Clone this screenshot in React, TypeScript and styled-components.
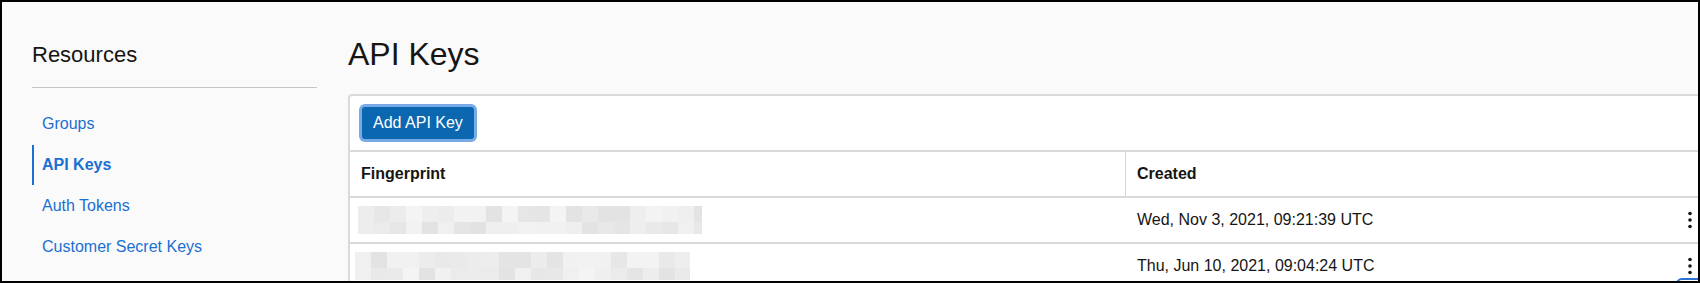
import React from 'react'
import styled, { createGlobalStyle } from 'styled-components'

const GlobalStyle = createGlobalStyle`
  html, body {
    margin: 0;
    padding: 0;
    background: #fff;
  }
  body {
    font-family: 'Liberation Sans', Arial, sans-serif;
  }
  * {
    box-sizing: border-box;
  }
`

const Frame = styled.div`
  position: relative;
  display: flex;
  width: 1700px;
  height: 283px;
  border: 2px solid #000;
  background: #fafafa;
  overflow: hidden;
`

const Sidebar = styled.aside`
  flex: 0 0 285px;
  margin-left: 30px;
  padding-top: 39px;
`

const SideTitle = styled.h2`
  margin: 0;
  padding-bottom: 18px;
  border-bottom: 1px solid #c6c6c6;
  font-size: 22px;
  line-height: 28px;
  font-weight: 400;
  color: #161513;
`

const NavList = styled.nav`
  display: flex;
  flex-direction: column;
  gap: 1px;
  margin-top: 16px;
`

const NavItem = styled.a<{ $active?: boolean }>`
  display: flex;
  align-items: center;
  height: 40px;
  padding-left: 8px;
  border-left: 2px solid ${(p) => (p.$active ? '#1a6fd2' : 'transparent')};
  font-size: 16px;
  font-weight: ${(p) => (p.$active ? 700 : 400)};
  color: #1a6fd2;
  text-decoration: none;
  white-space: nowrap;
`

const Main = styled.main`
  flex: 0 0 1364px;
  margin-left: 31px;
  padding-top: 33px;
`

const PageTitle = styled.h1`
  margin: 0 0 21px;
  font-size: 32px;
  line-height: 38px;
  font-weight: 400;
  color: #161513;
`

const Panel = styled.section`
  width: 1364px;
  border: 2px solid #d8dadc;
  border-radius: 4px;
  background: #fff;
`

const Toolbar = styled.div`
  display: flex;
  align-items: center;
  height: 56px;
  padding-left: 12px;
  border-bottom: 2px solid #d8dadc;
`

const PrimaryButton = styled.button`
  height: 32px;
  padding: 0 11px;
  border: none;
  border-radius: 3px;
  background: #0b67b0;
  box-shadow: 0 0 0 3px #78aae8;
  color: #fff;
  font-family: inherit;
  font-size: 16px;
  cursor: pointer;
`

const Row = styled.div`
  display: grid;
  grid-template-columns: 775px 1fr 40px;
  height: 46px;
  border-bottom: 2px solid #d8dadc;
`

const HeadCell = styled.div<{ $divider?: boolean }>`
  display: flex;
  align-items: center;
  padding-left: 11px;
  border-left: ${(p) => (p.$divider ? '1px solid #d6d6d6' : 'none')};
  font-size: 16px;
  font-weight: 700;
  color: #161513;
`

const Cell = styled.div<{ $pad?: number }>`
  display: flex;
  align-items: center;
  padding-left: ${(p) => p.$pad ?? 12}px;
  font-size: 16px;
  color: #161513;
  white-space: nowrap;
`

const ActionCell = styled.div`
  display: flex;
  align-items: center;
  justify-content: center;
`

const HelpTab = styled.div`
  position: absolute;
  left: 1674px;
  top: 276px;
  width: 60px;
  height: 40px;
  border: 2px solid #2a72d4;
  border-radius: 6px;
  background: #fff;
`

// pixelated redaction over the fingerprint value
const Redacted: React.FC<{ width: number; seed: number }> = ({ width, seed }) => {
  let s = seed
  const next = () => {
    s = (s * 1103515245 + 12345) % 2147483648
    return s / 2147483648
  }
  const cells: React.ReactNode[] = []
  const rows = [
    { y: 0, h: 16 },
    { y: 16, h: 12 },
  ]
  rows.forEach((r, ri) => {
    for (let x = 0; x < width; x += 16) {
      const v = Math.round(226 + next() * 18)
      cells.push(
        <rect
          key={`${ri}-${x}`}
          x={x}
          y={r.y}
          width={Math.min(16, width - x)}
          height={r.h}
          fill={`rgb(${v},${v},${v + 1})`}
        />
      )
    }
  })
  return (
    <svg width={width} height={28} viewBox={`0 0 ${width} 28`}>
      {cells}
    </svg>
  )
}

const Kebab = () => (
  <svg width="6" height="20" viewBox="0 0 6 20">
    <circle cx="3" cy="3.5" r="1.8" fill="#161513" />
    <circle cx="3" cy="10" r="1.8" fill="#161513" />
    <circle cx="3" cy="16.5" r="1.8" fill="#161513" />
  </svg>
)

const navItems = ['Groups', 'API Keys', 'Auth Tokens', 'Customer Secret Keys', 'Database Passwords']

const keys = [
  { pad: 8, width: 344, seed: 7, created: 'Wed, Nov 3, 2021, 09:21:39 UTC' },
  { pad: 5, width: 335, seed: 91, created: 'Thu, Jun 10, 2021, 09:04:24 UTC' },
]

export default function App() {
  return (
    <>
      <GlobalStyle />
      <Frame>
        <Sidebar>
          <SideTitle>Resources</SideTitle>
          <NavList>
            {navItems.map((item) => (
              <NavItem key={item} href="#" $active={item === 'API Keys'}>
                {item}
              </NavItem>
            ))}
          </NavList>
        </Sidebar>
        <Main>
          <PageTitle>API Keys</PageTitle>
          <Panel>
            <Toolbar>
              <PrimaryButton>Add API Key</PrimaryButton>
            </Toolbar>
            <Row>
              <HeadCell>Fingerprint</HeadCell>
              <HeadCell $divider>Created</HeadCell>
              <HeadCell />
            </Row>
            {keys.map((k) => (
              <Row key={k.created}>
                <Cell $pad={k.pad}>
                  <Redacted width={k.width} seed={k.seed} />
                </Cell>
                <Cell>{k.created}</Cell>
                <ActionCell>
                  <Kebab />
                </ActionCell>
              </Row>
            ))}
          </Panel>
        </Main>
        <HelpTab />
      </Frame>
    </>
  )
}
